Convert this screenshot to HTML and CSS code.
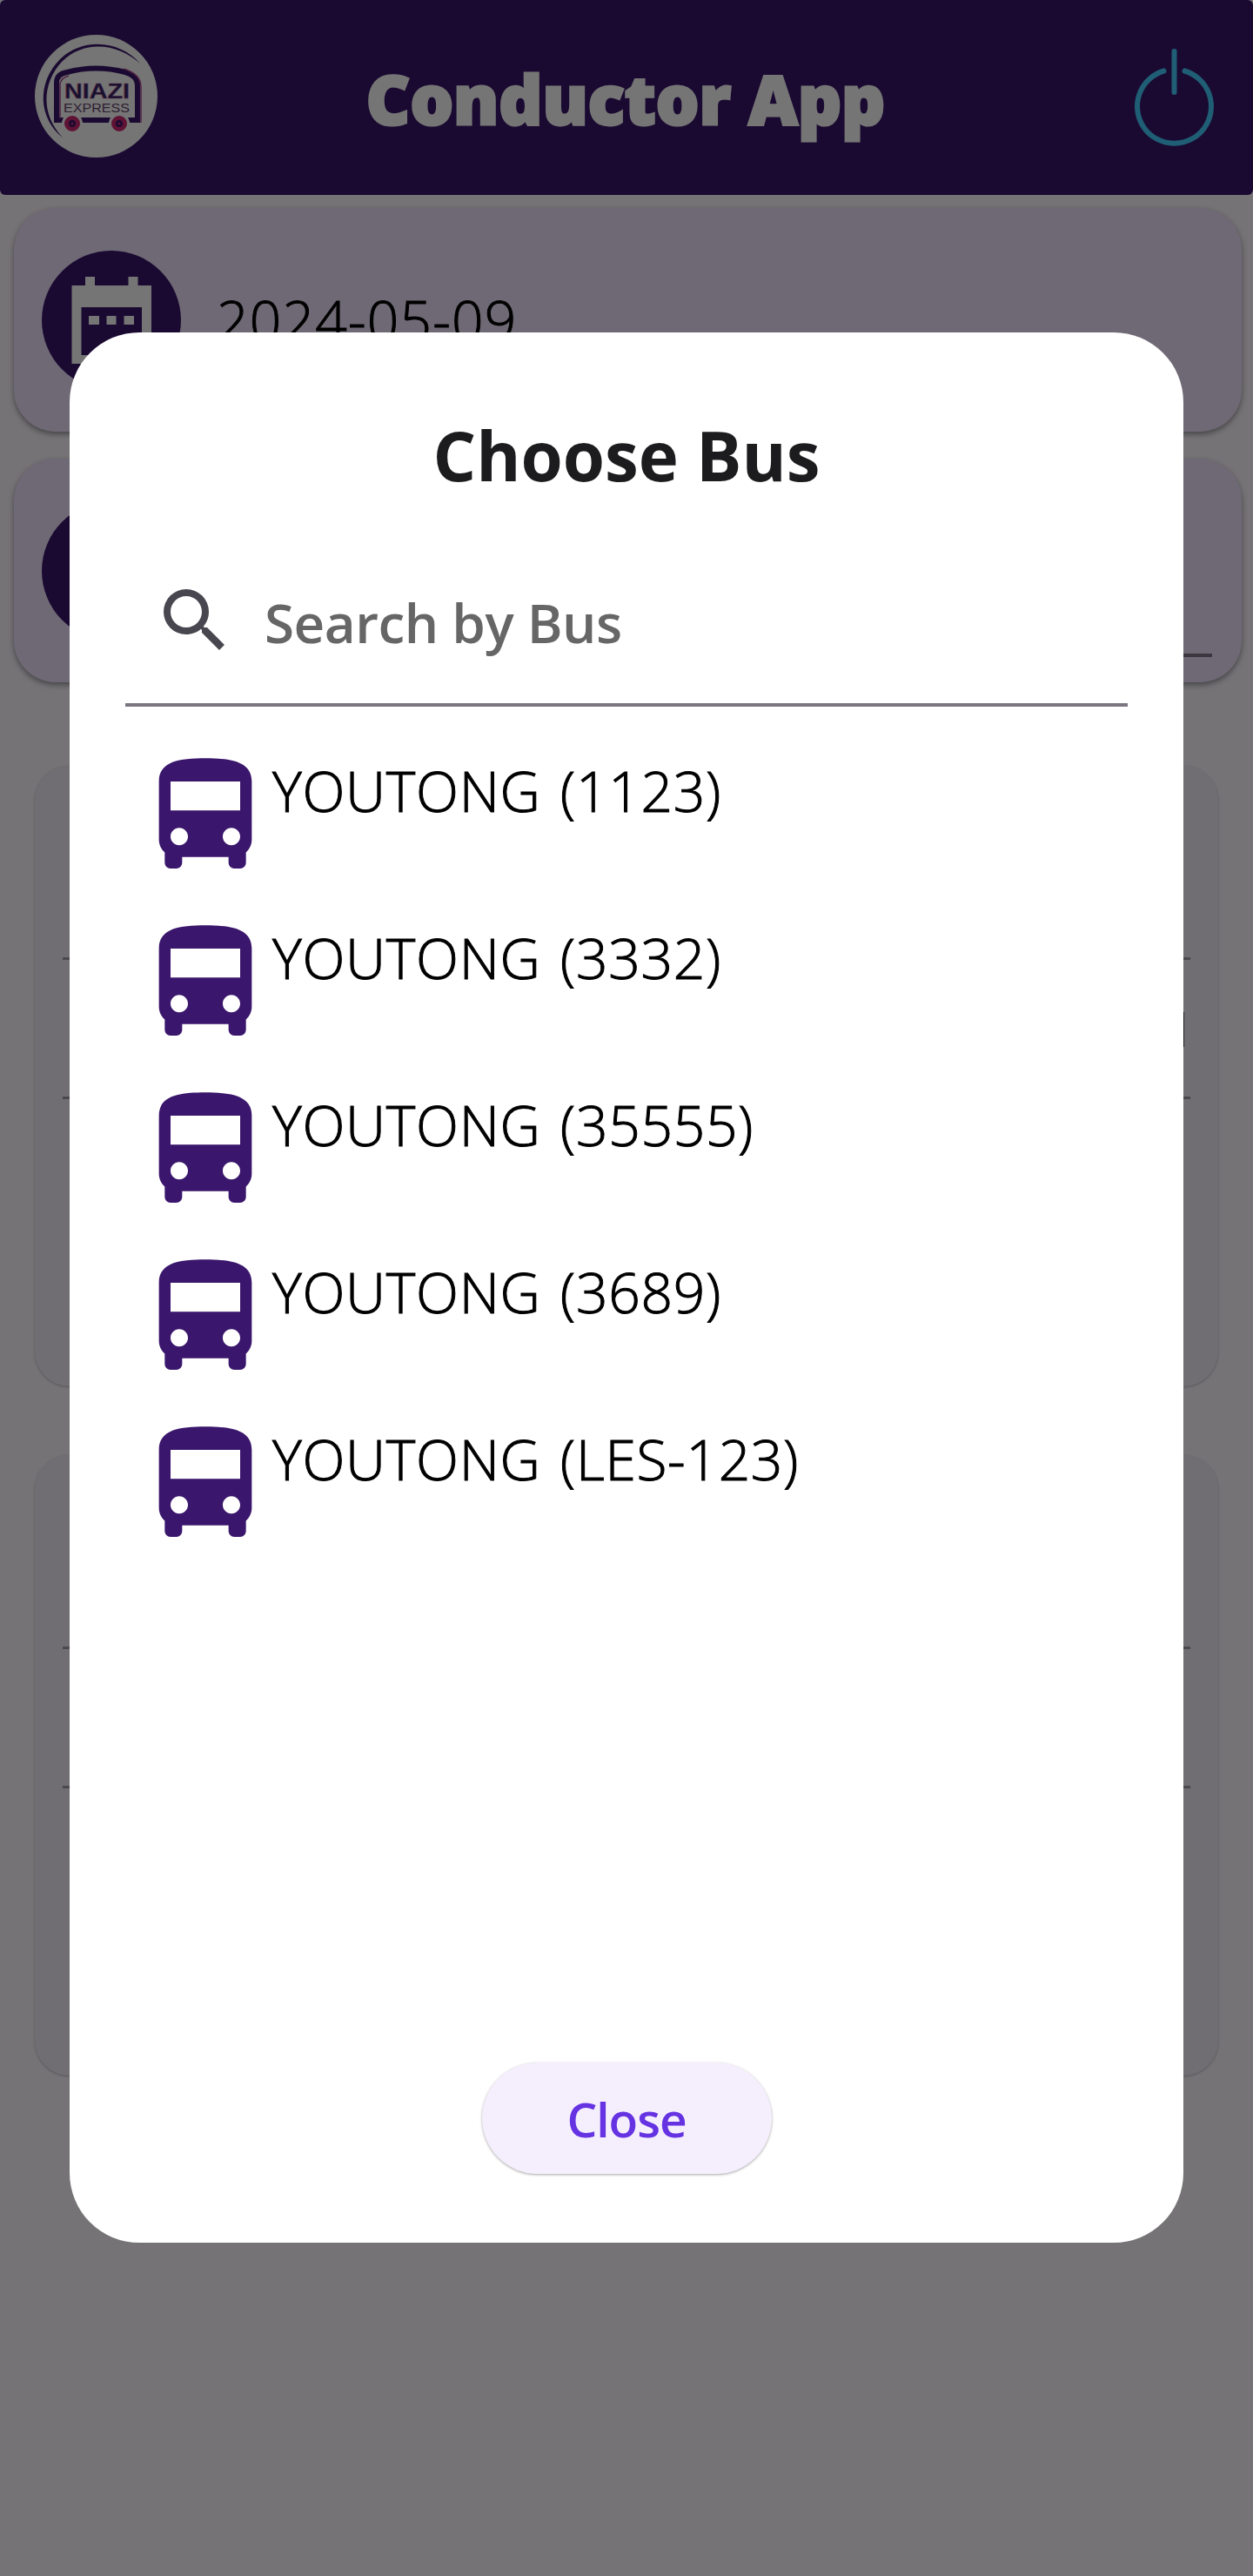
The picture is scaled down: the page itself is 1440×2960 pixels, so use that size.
FILE: index.html
```html
<!DOCTYPE html>
<html lang="en">
<head>
  <meta charset="UTF-8">
  <title>Conductor App</title>
  <link rel="stylesheet" href="styles.css">
</head>
<body>
  <!-- Bus icon shared by the list rows -->
  <svg class="sprite" aria-hidden="true">
    <symbol id="bus" viewBox="0 0 24 24">
      <path fill-rule="evenodd" d="M4 16c0 .88.39 1.67 1 2.22V20c0 .55.45 1 1 1h1c.55 0 1-.45 1-1v-1h8v1c0 .55.45 1 1 1h1c.55 0 1-.45 1-1v-1.78c.61-.55 1-1.34 1-2.22V6c0-3.5-3.58-4-8-4s-8 .5-8 4v10zm3.5 1c-.83 0-1.5-.67-1.5-1.5S6.67 14 7.5 14s1.5.67 1.5 1.5S8.33 17 7.5 17zm9 0c-.83 0-1.5-.67-1.5-1.5s.67-1.5 1.5-1.5 1.5.67 1.5 1.5-.67 1.5-1.5 1.5zM18 11H6V6h12v5z"/>
    </symbol>
  </svg>

  <!-- Header -->
  <header class="app-header">
    <svg class="logo" viewBox="0 0 141 141">
      <circle cx="70.5" cy="70.5" r="70.5" fill="#fff"/>
      <path d="M121 33C100 8 57 1 29 28C2 55 4 96 32 118C7 92 8 56 31 31C58 4 97 11 121 33z" fill="#3a166c"/>
      <path d="M25 98V55Q25 45 37 43Q70 34 104 43Q118 47 118 58V98z" fill="none" stroke="#3a166c" stroke-width="6"/>
      <path d="M29 96V56Q31 49 39 47M102 39Q122 45 122 60V101" fill="none" stroke="#b04a92" stroke-width="1.5"/>
      <circle cx="43" cy="102" r="12" fill="#fff"/>
      <circle cx="97" cy="102" r="12" fill="#fff"/>
      <circle cx="43" cy="102" r="6.5" fill="#3a166c" stroke="#d02872" stroke-width="5"/>
      <circle cx="97" cy="102" r="6.5" fill="#3a166c" stroke="#d02872" stroke-width="5"/>
      <circle cx="43" cy="102" r="1.5" fill="#d02872"/>
      <circle cx="97" cy="102" r="1.5" fill="#d02872"/>
      <text class="logo-name" x="34" y="73" textLength="75" lengthAdjust="spacingAndGlyphs">NIAZI</text>
      <text class="logo-sub" x="33" y="89" textLength="76" lengthAdjust="spacingAndGlyphs">EXPRESS</text>
    </svg>
    <h1>Conductor App</h1>
    <svg class="power" viewBox="0 0 96 120">
      <path d="M36.5 28.5A42.5 42.5 0 1 0 60.5 28.5M48.5 6V53"/>
    </svg>
  </header>

  <!-- Screen behind the dialog -->
  <main>
    <div class="card">
      <svg class="card-icon" viewBox="0 0 160 160">
        <circle cx="80" cy="80" r="80"/>
        <path fill="#fff" fill-rule="evenodd" d="M34.5 40H50V30H61V40H99.5V30H110.5V40H126V130H34.5zM45.5 65V120H115V65z"/>
        <path fill="#fff" d="M54 75h12v10H54zM74.5 75h11v10h-11zM94.5 75h11.5v10H94.5z"/>
      </svg>
      <span class="date">2024-05-09</span>
    </div>
    <div class="card">
      <svg class="card-icon" viewBox="0 0 160 160"><circle cx="80" cy="80" r="80"/></svg>
      <div class="card-input"></div>
    </div>

    <div class="panel">
      <div class="row"></div>
      <div class="row value"></div>
    </div>
    <div class="panel">
      <div class="row"></div>
      <div class="row"></div>
    </div>
  </main>

  <!-- Choose bus dialog -->
  <div class="scrim">
    <section class="dialog">
      <h2>Choose Bus</h2>
      <div class="search">
        <svg viewBox="0 0 24 24"><path d="M15.5 14h-.79l-.28-.27A6.47 6.47 0 0 0 16 9.5 6.5 6.5 0 1 0 9.5 16c1.61 0 3.09-.59 4.23-1.57l.27.28v.79l5 4.99L20.49 19l-4.99-5zm-6 0C7.01 14 5 11.99 5 9.5S7.01 5 9.5 5 14 7.01 14 9.5 11.99 14 9.5 14z"/></svg>
        <span>Search by Bus</span>
      </div>
      <ul class="bus-list">
        <li><svg><use href="#bus"/></svg><span>YOUTONG (1123)</span></li>
        <li><svg><use href="#bus"/></svg><span>YOUTONG (3332)</span></li>
        <li><svg><use href="#bus"/></svg><span>YOUTONG (35555)</span></li>
        <li><svg><use href="#bus"/></svg><span>YOUTONG (3689)</span></li>
        <li><svg><use href="#bus"/></svg><span>YOUTONG (LES-123)</span></li>
      </ul>
      <button class="close-btn">Close</button>
    </section>
  </div>
</body>
</html>
```
FILE: styles.css
```css
:root {
  --primary: #3a166c;
  --surface: #fefaff;
  --card: #f1e4fe;
  --panel: #f3eff8;
  --accent: #6533e2;
}

* {
  margin: 0;
  padding: 0;
  box-sizing: border-box;
}

body {
  position: relative;
  height: 2960px;
  font-family: "Open Sans", "Noto Sans", sans-serif;
  background: var(--surface);
  overflow-x: hidden;
}

.sprite {
  display: none;
}

/* Header */
.app-header {
  display: flex;
  justify-content: space-between;
  align-items: center;
  height: 224px;
  padding: 0 43px 0 40px;
  border-radius: 6px;
  background: var(--primary);
}

.logo {
  width: 141px;
  height: 141px;
  margin-top: -3px;
}

.logo-name {
  font: bold 23px "Liberation Sans", sans-serif;
  fill: #2c2464;
  stroke: #b8609c;
  stroke-width: 0.6px;
}

.logo-sub {
  font: 15px "Liberation Sans", sans-serif;
  fill: #66446e;
}

.app-header h1 {
  color: #fff;
  font-size: 78px;
  font-weight: 800;
  line-height: 100px;
  margin: 1px 0 0 -44px;
  white-space: nowrap;
  -webkit-text-stroke: 3px #fff;
}

.power {
  width: 96px;
  height: 120px;
  margin-top: 2px;
  fill: none;
  stroke: #44ceff;
  stroke-width: 6;
  stroke-linecap: round;
}

/* Cards */
.card {
  display: flex;
  align-items: center;
  gap: 41px;
  height: 257px;
  margin: 15px 13px 31px 16px;
  padding: 0 34px 0 32px;
  border-radius: 48px;
  background: var(--card);
  box-shadow: 0 3px 6px rgba(0, 0, 0, 0.4);
}

.card-icon {
  width: 160px;
  height: 160px;
  fill: var(--primary);
}

.date {
  font-size: 64px;
  font-weight: 300;
  letter-spacing: 1.2px;
  -webkit-text-stroke: 1px #000;
}

.card-input {
  flex: 1;
  height: 198px;
  border-bottom: 4px solid #82768a;
}

/* Detail panels */
.panel {
  height: 713px;
  margin: 0 40px 79px;
  padding: 63px 32px;
  border-radius: 40px;
  background: var(--panel);
  box-shadow: 0 1px 3px rgba(0, 0, 0, 0.25);
}

.card + .panel {
  margin-top: 96px;
}

.row {
  display: flex;
  justify-content: flex-end;
  height: 160px;
  padding: 60px 7px;
  border-bottom: 3px solid #a1a0a5;
}

.value::after {
  content: "";
  width: 3px;
  height: 40px;
  background: #444;
}

/* Dialog */
.scrim {
  position: absolute;
  inset: 0;
  padding: 382px 80px 0;
  background: rgba(0, 0, 0, 0.54);
}

.dialog {
  display: flex;
  flex-direction: column;
  height: 2195px;
  padding: 91px 64px 79px;
  border-radius: 80px;
  background: #fff;
}

.dialog h2 {
  color: #1c1b1d;
  font-size: 78px;
  font-weight: 700;
  line-height: 100px;
  text-align: center;
}

.search {
  display: flex;
  align-items: center;
  gap: 32px;
  height: 194px;
  margin-top: 45px;
  padding: 0 32px;
  border-bottom: 4px solid #79767f;
  color: #666;
  font-size: 62px;
  font-weight: 600;
  letter-spacing: -0.5px;
}

.search svg {
  width: 96px;
  height: 96px;
  fill: #48464f;
}

.search span {
  padding-top: 4px;
}

.bus-list {
  flex: 1;
  margin-top: 46px;
  padding-left: 12px;
  list-style: none;
}

.bus-list li {
  display: flex;
  height: 192px;
  color: #000;
  font-size: 64px;
  font-weight: 300;
  line-height: 101px;
  letter-spacing: 0.7px;
  word-spacing: 5px;
  -webkit-text-stroke: 1px #000;
}

.bus-list svg {
  width: 160px;
  height: 160px;
  margin-right: -3px;
  fill: var(--primary);
}

.close-btn {
  align-self: center;
  width: 333px;
  height: 128px;
  border: none;
  border-radius: 64px;
  background: #f5effd;
  box-shadow: 0 1px 3px rgba(0, 0, 0, 0.35);
  color: var(--accent);
  font: 600 55px "Open Sans", sans-serif;
  letter-spacing: -1px;
}
```
